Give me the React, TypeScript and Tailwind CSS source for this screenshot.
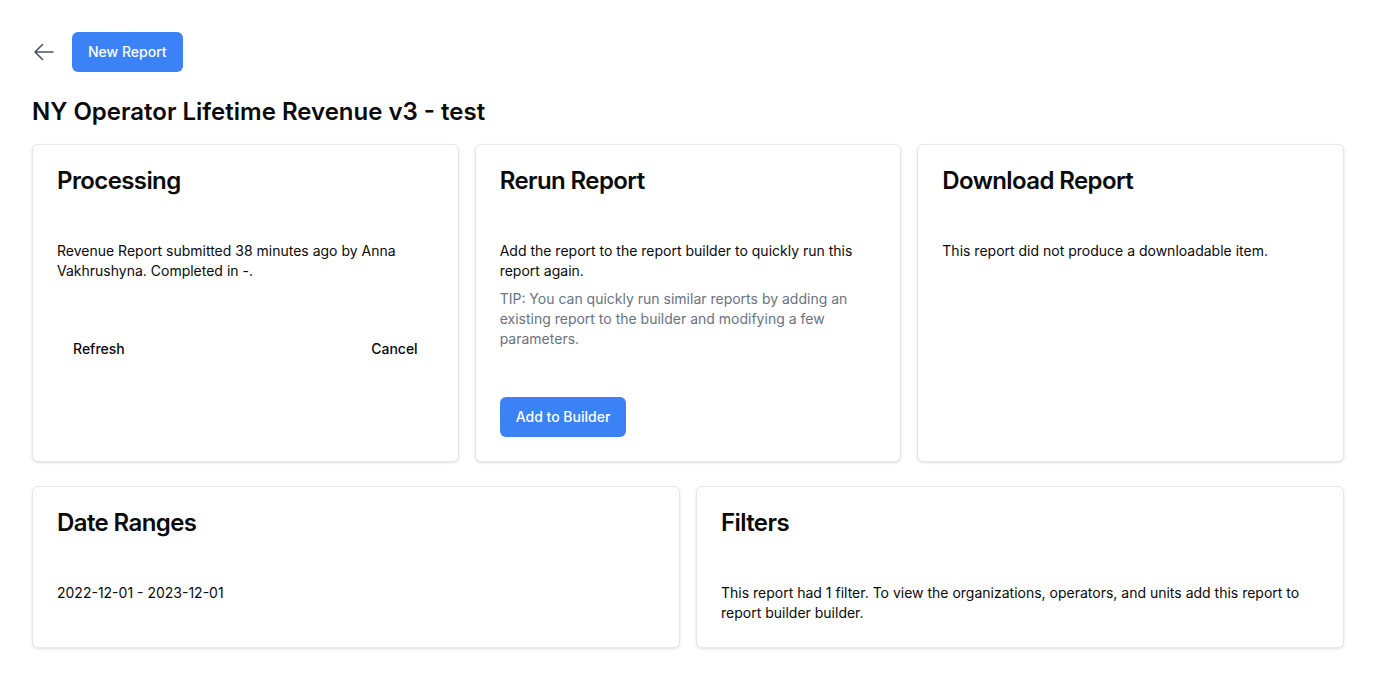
import React from "react";

function Card({ className = "", children }: { className?: string; children: React.ReactNode }) {
  return (
    <div className={"flex flex-col rounded-md border border-gray-200 bg-white shadow-sm " + className}>
      {children}
    </div>
  );
}

function Title({ children }: { children: React.ReactNode }) {
  return (
    <div className="p-6">
      <h3 className="text-2xl font-semibold leading-none tracking-tight text-[#0a0a0a]">{children}</h3>
    </div>
  );
}

export default function App() {
  return (
    <div className="min-h-screen bg-white p-8 text-[#0a0a0a]" style={{ fontFamily: "Inter, 'Noto Sans', sans-serif" }}>
      <div className="flex items-center gap-4">
        <button className="flex h-6 w-6 items-center justify-center text-gray-600">
          <svg width="24" height="24" viewBox="0 0 24 24" fill="none" stroke="currentColor" strokeWidth="1.6" strokeLinecap="round" strokeLinejoin="round">
            <path d="M10.5 19.5 3 12m0 0 7.5-7.5M3 12h18" />
          </svg>
        </button>
        <button className="h-10 rounded-md bg-[#3b82f6] px-4 text-sm font-medium text-white">New Report</button>
      </div>
      <h1 className="mt-6 text-2xl font-semibold leading-8">NY Operator Lifetime Revenue v3 - test</h1>
      <div className="mt-4 grid grid-cols-3 gap-4">
        <Card>
          <Title>Processing</Title>
          <div className="px-6 pt-6 text-sm leading-5">
            Revenue Report submitted 38 minutes ago by Anna Vakhrushyna. Completed in -.
          </div>
          <div className="flex items-center justify-between p-6 pt-12">
            <button className="h-10 rounded-md px-4 text-sm font-medium">Refresh</button>
            <button className="h-10 rounded-md px-4 text-sm font-medium">Cancel</button>
          </div>
        </Card>
        <Card>
          <Title>Rerun Report</Title>
          <div className="px-6 pt-6 text-sm leading-5">
            <p>Add the report to the report builder to quickly run this report again.</p>
            <p className="mt-2 text-gray-500">
              TIP: You can quickly run similar reports by adding an existing report to the builder and modifying a few parameters.
            </p>
          </div>
          <div className="flex items-center p-6 pt-12">
            <button className="h-10 rounded-md bg-[#3b82f6] px-4 text-sm font-medium text-white">Add to Builder</button>
          </div>
        </Card>
        <Card>
          <Title>Download Report</Title>
          <div className="px-6 pt-6 text-sm leading-5">This report did not produce a downloadable item.</div>
        </Card>
      </div>
      <div className="mt-6 grid grid-cols-2 gap-4">
        <Card>
          <Title>Date Ranges</Title>
          <div className="px-6 pb-6 pt-6 text-sm leading-5">2022-12-01 - 2023-12-01</div>
        </Card>
        <Card>
          <Title>Filters</Title>
          <div className="px-6 pb-6 pt-6 text-sm leading-5">
            This report had 1 filter. To view the organizations, operators, and units add this report to report builder builder.
          </div>
        </Card>
      </div>
    </div>
  );
}
